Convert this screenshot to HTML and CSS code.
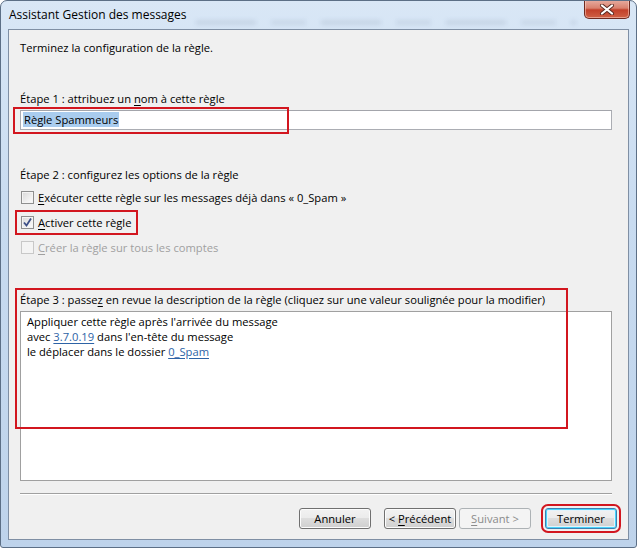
FILE: index.html
```html
<!DOCTYPE html>
<html lang="fr">
<head>
    <meta charset="UTF-8">
    <meta name="viewport" content="width=device-width, initial-scale=1.0">
    <title>Assistant Gestion des messages</title>
    <link rel="stylesheet" href="styles.css">
</head>
<body>
    <div class="window">
        <div class="titlebar">
            <span class="title">Assistant Gestion des messages</span>
            <button class="close" title="Fermer">
                <svg width="16" height="11" viewBox="0 0 16 11">
                    <path d="M3 1.5 L13 9.5 M13 1.5 L3 9.5" stroke="#5a2a22" stroke-width="4" stroke-linecap="round"/>
                    <path d="M3 1.5 L13 9.5 M13 1.5 L3 9.5" stroke="#fff" stroke-width="2.2" stroke-linecap="round"/>
                </svg>
            </button>
        </div>

        <div class="client">
            <p class="intro">Terminez la configuration de la règle.</p>

            <div class="step step-name">
                <div class="step-label">Étape 1 : attribuez un <u>n</u>om à cette règle</div>
                <div class="textbox"><span class="selected">Règle Spammeurs</span></div>
            </div>

            <div class="step step-options">
                <div class="step-label">Étape 2 : configurez les options de la règle</div>
                <ul class="options">
                    <li class="option">
                        <span class="check"></span>
                        <span><u>E</u>xécuter cette règle sur les messages déjà dans « 0_Spam »</span>
                    </li>
                    <li class="option">
                        <span class="option-marked">
                            <span class="check checked">
                                <svg width="11" height="11" viewBox="0 0 11 11">
                                    <path d="M2 5.5 L4.5 8.5 L9 1.5" fill="none" stroke="#3d4f86" stroke-width="1.8"/>
                                </svg>
                            </span>
                            <span><u>A</u>ctiver cette règle</span>
                        </span>
                    </li>
                    <li class="option disabled">
                        <span class="check"></span>
                        <span><u>C</u>réer la règle sur tous les comptes</span>
                    </li>
                </ul>
            </div>

            <div class="step step-desc">
                <div class="step-label">Étape 3 : passe<u>z</u> en revue la description de la règle (cliquez sur une valeur soulignée pour la modifier)</div>
                <div class="description">
                    <p>Appliquer cette règle après l'arrivée du message</p>
                    <p>avec <a href="#">3.7.0.19</a> dans l'en-tête du message</p>
                    <p>le déplacer dans le dossier <a href="#">0_Spam</a></p>
                </div>
            </div>

            <hr class="separator">

            <div class="buttons">
                <button class="btn">Annuler</button>
                <button class="btn btn-prev">&lt; <u>P</u>récédent</button>
                <button class="btn" disabled><u>S</u>uivant &gt;</button>
                <button class="btn btn-default">Terminer</button>
            </div>

            <!-- red highlight frames drawn over the form -->
            <div class="mark mark-name"></div>
            <div class="mark mark-desc"></div>
        </div>
    </div>
</body>
</html>
```

FILE: styles.css
```css
body {
    margin: 0;
    padding: 0;
    background-color: #fff;
    font-family: "Open Sans", "Noto Sans", sans-serif;
    font-size: 11.2px;
    color: #000;
}
u {
    text-decoration-thickness: 1px;
    text-underline-offset: 2px;
}
.window {
    width: 637px;
    height: 548px;
    box-sizing: border-box;
    display: flex;
    flex-direction: column;
    background: linear-gradient(to bottom, #d9e7f6 0%, #c8dbf0 40%, #bed3eb 100%);
    border: 1px solid #5c6f86;
    border-radius: 7px 7px 3px 3px;
    overflow: hidden;
}
.titlebar {
    height: 28px;
    display: flex;
    align-items: flex-start;
    justify-content: space-between;
    position: relative;
}
/* blurred glass reflection behind the caption */
.titlebar::before {
    content: "";
    position: absolute;
    left: 195px;
    right: 60px;
    top: 19px;
    height: 5px;
    background: repeating-linear-gradient(to right, rgba(80, 100, 130, 0.12) 0 60px, transparent 60px 75px, rgba(80, 100, 130, 0.1) 75px 110px, transparent 110px 125px);
    filter: blur(2px);
}
.title {
    margin: 6px 0 0 8px;
    font-size: 12px;
    line-height: 16px;
    color: #000;
    position: relative;
}
.close {
    width: 46px;
    height: 19px;
    margin: -1px 6px 0 0;
    padding: 0;
    border: 1px solid #6e2a20;
    border-top: none;
    border-radius: 0 0 5px 5px;
    background: linear-gradient(to bottom, #e7ada1 0%, #d9816e 45%, #c2402a 55%, #cf6145 100%);
    box-shadow: inset 0 0 0 1px rgba(255, 220, 210, 0.5);
    display: flex;
    align-items: center;
    justify-content: center;
    position: relative;
}

.client {
    flex: 1;
    margin: 0 7px 7px 7px;
    padding: 10px 16px 0 11px;
    background-color: #f0f0f0;
    border: 1px solid #7f8fa4;
    position: relative;
    line-height: 15px;
}
.intro {
    margin: 0;
}
.step-name {
    margin-top: 36px;
}
.step-label {
    line-height: 15px;
}
.textbox {
    margin-top: 4px;
    height: 20px;
    box-sizing: border-box;
    border: 1px solid #abadb3;
    border-top-color: #a3a5ab;
    background-color: #fff;
    padding: 1px 2px;
    line-height: 16px;
}
.selected {
    background-color: #a9ccee;
    padding: 0 1px;
}

.step-options {
    margin-top: 37px;
}
.options {
    list-style: none;
    margin: 3px 0 0 0;
    padding: 0;
}
.option {
    height: 25px;
    display: flex;
    align-items: center;
}
.option-marked {
    display: inline-flex;
    align-items: center;
    outline: 2px solid #d2161f;
    outline-offset: 3px;
    padding-right: 2px;
}
.check {
    width: 11px;
    height: 11px;
    margin: 0 4px 0 1px;
    border: 1px solid #8e8f8f;
    background: linear-gradient(135deg, #d8d8d8 0%, #f3f3f3 70%, #fdfdfd 100%);
    box-shadow: inset 0 0 0 1px #f4f4f4;
    display: flex;
    align-items: center;
    justify-content: center;
    flex-shrink: 0;
}
.check svg {
    display: block;
}
.disabled {
    color: #a0a0a0;
}
.disabled .check {
    border-color: #c8c8c8;
    background: #f4f4f4;
    box-shadow: none;
}

.step-desc {
    margin-top: 32px;
}
.description {
    margin-top: 4px;
    height: 170px;
    box-sizing: border-box;
    border: 1px solid #a0a0a0;
    background-color: #fff;
    padding: 2px 6px;
}
.description p {
    margin: 0;
    line-height: 15px;
}
.description a {
    color: #2d63a6;
    text-decoration: underline;
    text-underline-offset: 2px;
}

.separator {
    margin: 12px 0 0 0;
    border: none;
    border-top: 1px solid #a0a0a0;
    border-bottom: 1px solid #fff;
    height: 0;
}
.buttons {
    margin: 13px -5px 0 0;
    display: flex;
    justify-content: flex-end;
    gap: 3px;
}
.btn {
    width: 72px;
    height: 21px;
    padding: 0;
    font-family: inherit;
    font-size: 11.2px;
    color: #000;
    border: 1px solid #707070;
    border-radius: 3px;
    background: linear-gradient(to bottom, #f2f2f2 0%, #ebebeb 49%, #dddddd 50%, #cfcfcf 100%);
    box-shadow: inset 0 0 0 1px #fcfcfc;
}
.btn:first-child {
    margin-right: 10px;
}
.btn:disabled {
    color: #8b8b8b;
    border-color: #adb2b5;
    background: #f4f4f4;
    box-shadow: none;
}
.btn-default {
    margin-left: 11px;
    border-color: #3c7fb1;
    box-shadow: inset 0 0 0 1px #49d3fb, inset 0 0 0 2px #e3f3fb;
    outline: 2px solid #d2161f;
    outline-offset: 2px;
}

.mark {
    position: absolute;
    border: 2px solid #d2161f;
    box-sizing: border-box;
}
.mark-name {
    left: 4px;
    top: 77px;
    width: 276px;
    height: 27px;
}
.mark-desc {
    left: 6px;
    top: 258px;
    width: 553px;
    height: 141px;
}
```
